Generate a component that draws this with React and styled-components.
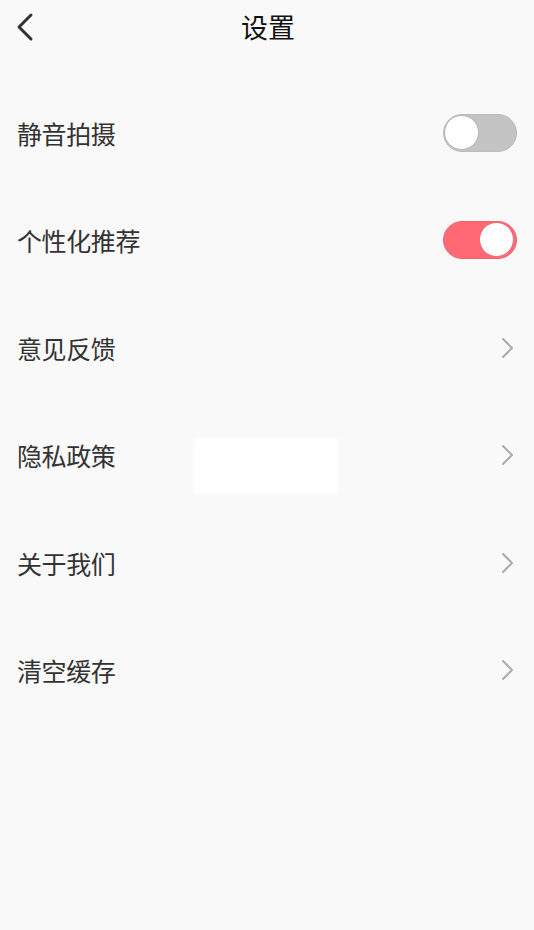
import React, { useState } from "react";
import styled, { createGlobalStyle } from "styled-components";

const GlobalStyle = createGlobalStyle`
  html, body {
    margin: 0;
    padding: 0;
    background: #f9f9f9;
  }
  body {
    font-family: "Noto Sans CJK SC", "Noto Sans", sans-serif;
  }
`;

const Page = styled.div`
  position: relative;
  width: 534px;
  height: 930px;
  background: #f9f9f9;
  overflow: hidden;
`;

const Header = styled.div`
  display: grid;
  grid-template-columns: 60px 1fr 60px;
  align-items: center;
  height: 54px;
`;

const BackButton = styled.button`
  display: flex;
  align-items: center;
  justify-content: flex-start;
  padding: 0 0 0 15px;
  height: 54px;
  border: none;
  background: none;
  cursor: pointer;
`;

const Title = styled.h1`
  margin: 0;
  text-align: center;
  font-size: 27px;
  font-weight: 400;
  color: #111;
  line-height: 54px;
  padding-left: 2px;
`;

const List = styled.div`
  display: flex;
  flex-direction: column;
  padding-top: 25px;
`;

const Row = styled.div`
  display: flex;
  align-items: center;
  justify-content: space-between;
  height: 107.5px;
  padding: 0 17px 0 17px;
`;

const Label = styled.span`
  font-size: 25px;
  color: #333;
  letter-spacing: -0.4px;
`;

const Track = styled.button`
  position: relative;
  width: 74px;
  height: 38px;
  padding: 0;
  border-radius: 19px;
  border: 1.5px solid ${(p) => (p.$on ? "#ef6670" : "#bcbcbc")};
  background: ${(p) => (p.$on ? "#ff6973" : "#c4c4c4")};
  cursor: pointer;
  box-sizing: border-box;
`;

const Knob = styled.span`
  position: absolute;
  top: 0;
  left: ${(p) => (p.$on ? "35px" : "0")};
  width: 35px;
  height: 35px;
  border-radius: 50%;
  background: #fff;
  border: 1.5px solid ${(p) => (p.$on ? "#ef6670" : "#b5b5b5")};
  box-sizing: border-box;
`;

const Chevron = styled.span`
  display: flex;
  align-items: center;
  margin-right: 3px;
`;

const Veil = styled.div`
  position: absolute;
  left: 194px;
  top: 437px;
  width: 145px;
  height: 57px;
  background: #fff;
  filter: blur(2px);
`;

function Toggle({ on, onClick }) {
  return (
    <Track $on={on} onClick={onClick}>
      <Knob $on={on} />
    </Track>
  );
}

function Arrow() {
  return (
    <Chevron>
      <svg width="13" height="22" viewBox="0 0 13 22">
        <path d="M2 2 L11 11 L2 20" fill="none" stroke="#ababab" strokeWidth="2" strokeLinecap="round" strokeLinejoin="round" />
      </svg>
    </Chevron>
  );
}

export default function App() {
  const [mute, setMute] = useState(false);
  const [recommend, setRecommend] = useState(true);

  const links = ["意见反馈", "隐私政策", "关于我们", "清空缓存"];

  return (
    <Page>
      <GlobalStyle />
      <Header>
        <BackButton aria-label="返回">
          <svg width="20" height="30" viewBox="0 0 20 30">
            <path d="M16 3 L4 15 L16 27" fill="none" stroke="#333" strokeWidth="3" strokeLinecap="round" strokeLinejoin="round" />
          </svg>
        </BackButton>
        <Title>设置</Title>
        <div />
      </Header>
      <List>
        <Row>
          <Label>静音拍摄</Label>
          <Toggle on={mute} onClick={() => setMute(!mute)} />
        </Row>
        <Row>
          <Label>个性化推荐</Label>
          <Toggle on={recommend} onClick={() => setRecommend(!recommend)} />
        </Row>
        {links.map((text) => (
          <Row key={text}>
            <Label>{text}</Label>
            <Arrow />
          </Row>
        ))}
      </List>
      <Veil />
    </Page>
  );
}
